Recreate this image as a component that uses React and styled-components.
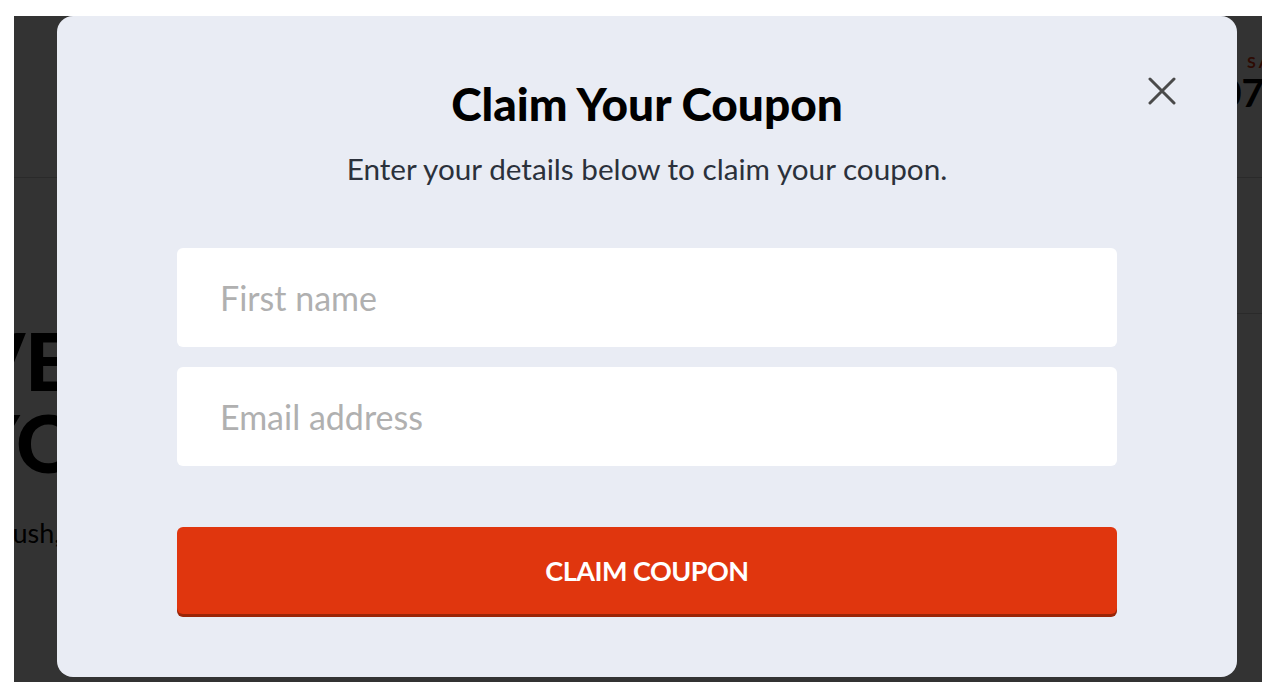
import React from "react";
import styled, { createGlobalStyle } from "styled-components";

const GlobalStyle = createGlobalStyle`
  html, body {
    margin: 0;
    padding: 0;
    background: #ffffff;
    font-family: "Lato", "Liberation Sans", sans-serif;
  }
`;

const Frame = styled.div`
  position: relative;
  width: 1248px;
  height: 666px;
  margin: 16px 0 0 14px;
  overflow: hidden;
  background: #ffffff;
`;

const Page = styled.div`
  width: 100%;
  height: 100%;
`;

const Header = styled.header`
  height: 161px;
  border-bottom: 1px solid #d2d2d2;
  display: flex;
  align-items: flex-start;
`;

const Contact = styled.div`
  margin-left: 1205px;
  padding-top: 36px;
  white-space: nowrap;
  .label {
    padding-left: 28px;
    font-size: 16px;
    letter-spacing: 0.2em;
    color: #e0360e;
    font-weight: 700;
  }
  .phone {
    font-size: 39px;
    font-weight: 700;
    color: #000;
    line-height: 1.1;
  }
`;

const Hero = styled.section`
  display: flex;
  justify-content: space-between;
`;

const HeroText = styled.div`
  margin-left: -148px;
  padding-top: 141px;
  white-space: nowrap;
  p {
    margin: 33px 0 0 124px;
    font-size: 27px;
    color: #000;
  }
`;

const Headline = styled.h1`
  margin: 0 0 0 ${p => p.$indent || 0}px;
  font-size: 80px;
  font-weight: 900;
  line-height: 82px;
  color: #000;
`;

const SideColumn = styled.div`
  width: 360px;
  height: 135px;
  border-bottom: 1px solid #d2d2d2;
`;

const Overlay = styled.div`
  position: absolute;
  inset: 0;
  background: rgba(0, 0, 0, 0.8);
  padding-left: 43px;
  display: flex;
  align-items: flex-start;
`;

const Modal = styled.div`
  position: relative;
  width: 1180px;
  height: 661px;
  box-sizing: border-box;
  background: #e9ecf4;
  border-radius: 16px;
  display: flex;
  flex-direction: column;
  align-items: center;
  padding-top: 58px;
`;

const Close = styled.button`
  position: absolute;
  top: 61px;
  right: 61px;
  width: 28px;
  height: 28px;
  padding: 0;
  border: none;
  background: none;
  cursor: pointer;
  svg {
    display: block;
  }
`;

const Title = styled.h2`
  margin: 0;
  font-size: 46px;
  font-weight: 900;
  color: #000;
  line-height: 60px;
`;

const Subtitle = styled.p`
  margin: 17px 0 0;
  font-size: 29.7px;
  color: #2b313b;
  line-height: 36px;
`;

const Form = styled.form`
  width: 940px;
  margin-top: 61px;
  display: flex;
  flex-direction: column;
  gap: 20px;
`;

const Field = styled.input`
  height: 99px;
  box-sizing: border-box;
  border: none;
  border-radius: 6px;
  background: #ffffff;
  padding: 0 43px;
  font-family: "Lato", "Liberation Sans", sans-serif;
  font-size: 34px;
  color: #333;
  outline: none;
  &::placeholder {
    color: #b0b0b0;
  }
`;

const Submit = styled.button`
  margin-top: 41px;
  height: 87px;
  border: none;
  border-radius: 6px;
  background: #e0360e;
  box-shadow: 0 3px 0 #9a2507;
  color: #ffffff;
  font-family: "Lato", "Liberation Sans", sans-serif;
  font-size: 27px;
  font-weight: 700;
  letter-spacing: -0.5px;
  cursor: pointer;
`;

export default function App() {
  return (
    <>
      <GlobalStyle />
      <Frame>
        <Page>
          <Header>
            <Contact>
              <div className="label">SALES</div>
              <div className="phone">0700 000</div>
            </Contact>
          </Header>
          <Hero>
            <HeroText>
              <Headline>LOVE</Headline>
              <Headline $indent={101}>YOUR</Headline>
              <p>Plush, green lawns</p>
            </HeroText>
            <SideColumn />
          </Hero>
        </Page>
        <Overlay>
          <Modal>
            <Close aria-label="Close">
              <svg width="28" height="28" viewBox="0 0 28 28">
                <path
                  d="M2 2 L26 26 M26 2 L2 26"
                  stroke="#4a4a4a"
                  strokeWidth="3"
                  strokeLinecap="round"
                />
              </svg>
            </Close>
            <Title>Claim Your Coupon</Title>
            <Subtitle>Enter your details below to claim your coupon.</Subtitle>
            <Form onSubmit={e => e.preventDefault()}>
              <Field type="text" placeholder="First name" />
              <Field type="email" placeholder="Email address" />
              <Submit type="submit">CLAIM COUPON</Submit>
            </Form>
          </Modal>
        </Overlay>
      </Frame>
    </>
  );
}
